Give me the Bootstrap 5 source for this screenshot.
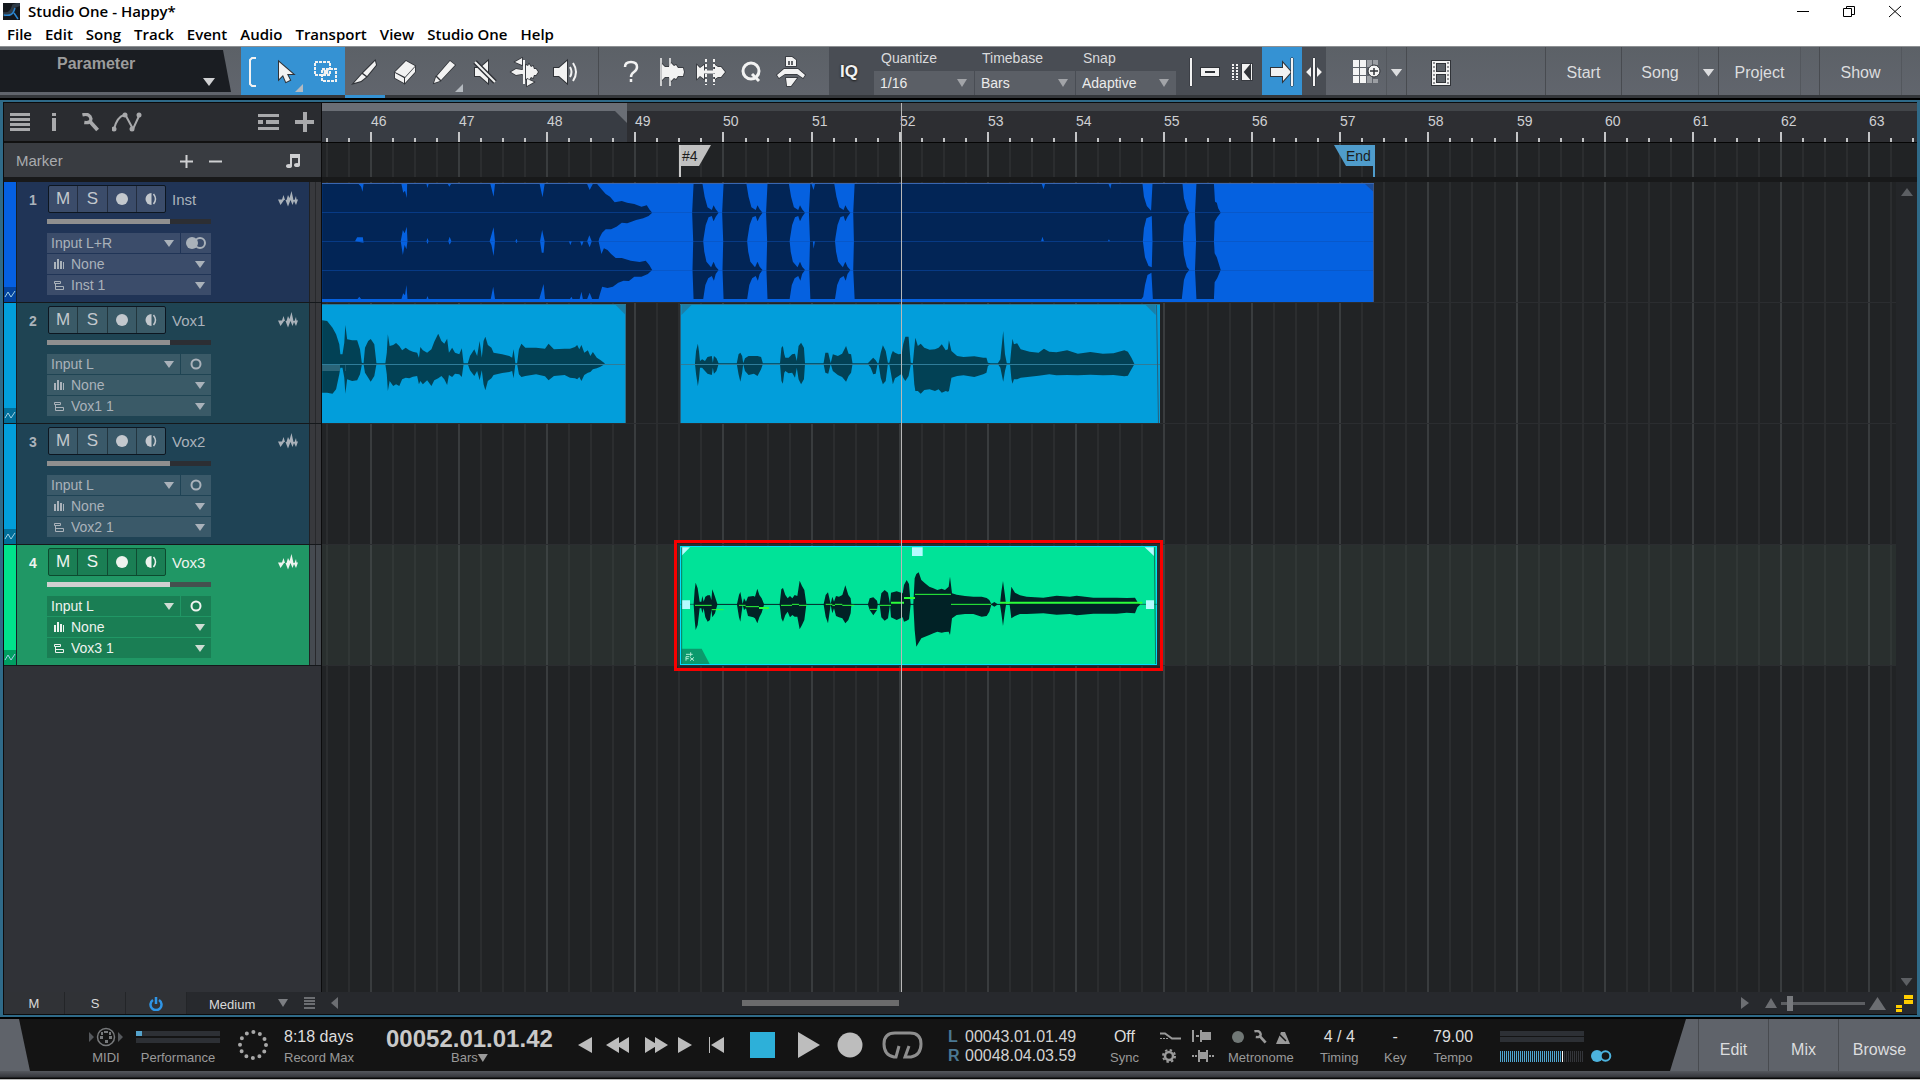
<!DOCTYPE html>
<html lang="en">
<head>
<meta charset="utf-8">
<meta name="viewport" content="width=device-width, initial-scale=1">
<title>Studio One - Happy*</title>
<link href="https://cdn.jsdelivr.net/npm/bootstrap@5.3.0/dist/css/bootstrap.min.css" rel="stylesheet">
<style>
body{font-family:"Liberation Sans",Arial,sans-serif;font-size:14px;line-height:20px;background:#000;color:#c3c5c8;min-height:100vh;overflow:hidden}
button,select{font:inherit;color:inherit;background:none;border:0;padding:0;margin:0;border-radius:0}
svg{display:block;flex:none}
a{color:inherit;text-decoration:none}
select{appearance:none;outline:0;cursor:pointer}
.app-shell{height:100vh}
/* window caption and menu */
.titlebar{height:22px;background:#fff;color:#000;padding:0 18px 0 3px;font:600 15px/20px "Open Sans","Noto Sans",sans-serif}
.win-btns{gap:32px}
.menubar{height:24px;background:#fff;color:#000;padding-left:7px;gap:13px;font:600 15px/24px "Open Sans","Noto Sans",sans-serif}
/* toolbar */
.toolbar{height:52px;background:linear-gradient(#5c6167,#61656d);border-top:1px solid #8d9093;border-bottom:3px solid #34373b;margin-bottom:2px}
.param-box{width:231px;margin:3px 10px 3px 0;background:#1a1d22;clip-path:polygon(0 0,223px 0,100% 100%,0 100%);color:#9c9c9c;font-weight:bold;font-size:16px}
.param-box span{margin:4px 0 0 57px}
.tri{width:12px;height:8px;background:currentColor;clip-path:polygon(0 0,100% 0,50% 100%);flex:none}
.tri.up{transform:rotate(180deg)}
.tri.sm{width:10px}
.tri.dim{color:#7c7e82}
.param-box .tri{position:absolute;left:203px;top:28px;color:#d0d1d3}
.tool{width:40px;padding-top:2px;display:flex;align-items:center;justify-content:center;position:relative;flex:none}
.tool.slim{width:24px}
.tool.slimmer{width:18px;padding-right:6px}
.tool.wide{width:60px;padding-left:22px}
.tool.iq{font-size:17px;font-weight:bold;color:#f2f2f2;text-shadow:0 0 2px #222,0 1px 2px #222}
.tool.sel{background:#3592d3}
.tool.armed::before{content:"";position:absolute;left:0;right:0;bottom:-3px;height:3px;background:#3592d3}
.tool.more::after{content:"";position:absolute;right:2px;bottom:3px;width:8px;height:8px;background:#b5bac0;clip-path:polygon(100% 0,100% 100%,0 100%)}
.ico *{paint-order:stroke}
.ico{fill:#f2f2f2;stroke:#303338;stroke-width:2;overflow:visible}
.ico .ln{fill:none;stroke:#f2f2f2}
.ico .bold{stroke-width:3}
.ico .holes{stroke:#303338}
.tgroup{display:flex;height:100%}
.tgroup.edge{border-left:1px solid #484b50;padding:0 18px 0 12px;margin-left:13px}
.tgroup.dark{background:#494d54}
.opts{margin:0 3px 0 5px}
.opt label{padding-left:7px;height:24px;line-height:22px;color:#d9dadc}
.opt{width:101px}
.pick{position:relative;background:#5b5f66;height:24px;margin-right:1px;color:#ececec}
.pick select{width:100%;height:24px;padding-left:6px}
.pick .tri{position:absolute;right:7px;top:8px;width:10px;color:#a2a4a8;pointer-events:none}
.page-btn{border-left:1px solid #484b50;padding-top:3px;font-size:16px;color:#dcdddf;text-align:center;height:100%}
.page-btn.thin{width:20px;border-left-color:#53575d}
.page-btn.last{width:19px}
.page-btn.w-start{width:76px}.page-btn.w-song{width:77px}.page-btn.w-page{width:82px}
/* arrange frame */
.frame{border:solid #2f6a88;border-width:2px 3px;background:#232528;flex:1 1 0;min-height:0;margin-bottom:2px}
.frame-in{border:1px solid #0b0c0d;border-right-width:0;height:100%}
.split{min-height:0}
.side{width:318px;border-right:1px solid #0b0b0c;background:#303237;flex:none}
.side-tools{height:40px;background:#2a2c30;border-bottom:2px solid #111;padding:0 7px 0 6px;color:#a8a9ab}
.gap-l{margin-left:22px}
.gap-s{margin-left:12px}
.gap-note{margin-left:64px}
.side-marker{height:34px;background:#393c41;padding:2px 20px 0 12px;font-size:15px;color:#a9abae}
.gutter{height:5px;background:#18191a}
.track{height:121px;border-bottom:1px solid #15181b;color:#aab2ba}
.strip{width:12px;flex:none}
.strip svg{margin-top:auto;width:12px;height:15px;background:rgba(0,0,0,.3)}
.t-body{width:293px;border-left:1px solid #15202a;padding:3px 11px 0 30px;position:relative}
.t-num{position:absolute;left:12px;top:8px;width:12px;font-weight:bold;font-size:14px}
.msr{width:118px;height:28px;border:1px solid #0d1620;border-radius:2px;background:rgba(255,255,255,.12);overflow:hidden;color:#c3c8cd}
.msr button{flex:1;display:flex;align-items:center;justify-content:center;font-size:17px;border-left:1px solid rgba(0,0,0,.4)}
.msr button:first-child{border-left:0}
.head-row{padding-left:1px}
.t-name{font-size:15px;margin:2px 0 0 6px}
.t-edge{width:12px;background:#38393d;border-left:1px solid #202225}
.t-edge i{display:block;width:6px;height:100%;border-right:1px solid #28292c}
.fader{appearance:none;display:block;width:164px;height:5px;margin:6px 0 9px;background:linear-gradient(90deg,#8f8f8f 75%,#2c2e33 75%)}
.fader::-webkit-slider-thumb{appearance:none;width:1px;height:5px;background:transparent}
.io{width:164px;gap:1px}
.io-line{height:20px;background:rgba(255,255,255,.12);position:relative;padding-left:7px}
.io-line svg{width:10px;margin-right:7px}
.io-line select{flex:1;height:20px;line-height:20px;min-width:0}
.io-line .tri{position:absolute;right:6px;top:7px;width:10px;height:7px;pointer-events:none}
.io-half{width:30px;margin-left:1px;background:rgba(255,255,255,.12);display:flex;align-items:center;justify-content:center}
.io-line.inp{padding-left:4px}
.track.cur{color:#eef3ef}
.track.cur .msr{background:rgba(0,0,0,.16);border-color:#0c4a2e;color:#eef3ef}
.track.cur .io-line,.track.cur .io-half{background:rgba(0,0,0,.16)}
.track.cur .tri{color:#cfdcd4}
.track.cur .t-edge{background:#454a50}
.track.cur .fader{background:linear-gradient(90deg,#d0d0d0 75%,#45504e 75%)}
/* time line */
.timeline{background:#212325;overflow:hidden}
.ruler{height:40px;background:linear-gradient(#424549 8px,#2d2e32 8px);border-bottom:1px solid #050505}
.loop-range{position:absolute;left:0;top:0;width:305px;height:39px;background:linear-gradient(#6a6e75 8px,#383c43 8px)}
.loop-range::after{content:"";position:absolute;right:0;top:8px;width:12px;height:12px;background:#6a6e75;clip-path:polygon(0 0,100% 0,100% 100%)}
.bar-no{position:absolute;top:8px;color:#cfd0d2}
.over{position:absolute;left:0;top:0}
.marker-lane{height:34px}
.flag{position:absolute;top:2px;height:32px;font-size:14px;color:#1c1c1c}
.flag span{display:block;height:21px;line-height:23px}
.flag.mk{border-left:2px solid #c8c8c8;left:357px}
.flag.mk span{background:#c0c0c0;width:30px;clip-path:polygon(0 0,100% 0,18px 100%,0 100%);padding-left:1px}
.flag.end{border-right:2px solid #4f9ccb;left:1012px}
.flag.end span{background:#4f9ccb;width:39px;clip-path:polygon(0 0,100% 0,100% 100%,12px 100%);padding-left:12px}
.vscroll{width:21px;background:#242629;color:#5c5f63;padding:6px 0}
.lane{height:121px;border-bottom:1px solid #2b2d30}
.lane.cur{background:rgba(72,92,82,.22)}
.clip{position:absolute;top:1px;height:119px;overflow:hidden}
.clip.inst{left:0;width:1052px;background:#0561e0;border-top:1px solid #3a66b0}
.clip.vox{background:#029edb;border-top:1px solid #2a7897}
.clip.v-a{left:0;width:304px}
.clip.v-b{left:358px;width:480px}
.clip.pick-on{left:358px;width:477px;background:#00e398;outline:1px solid #00e0ff;outline-offset:-1px}
.red-mark{position:absolute;left:352px;top:-5px;width:489px;height:131px;border:3px solid #f80000}
.playhead{position:absolute;left:579px;top:0;bottom:0;width:1px;background:#b8b8b8}
.arr-foot{height:22px;background:#27292d;font-size:13px;color:#dadada}
.arr-foot .sq{width:61px;height:22px;padding-top:2px;background:#303236;border-right:1px solid #232528}
.height-pick{width:69px;margin:3px 0 0 22px}
.arr-foot .rows-i{margin:0 16px}
.hthumb{position:absolute;left:404px;top:8px;width:157px;height:6px;background:#6b6b6c}
.zoomer{appearance:none;width:84px;height:15px;background:linear-gradient(transparent 6px,#5c5e62 6px 9px,transparent 9px);margin:0 4px}
.zoomer::-webkit-slider-thumb{appearance:none;width:6px;height:15px;background:#77797d}
.stairs{margin:0 4px 0 10px}
/* transport */
.transport{height:52px;background:#141414;display:grid;grid-template-columns:89px 47px 102px 46px 102px 192px 370px 162px 50px 68px 92px 64px 49px 67px 112px 1fr auto;color:#9a9a9a;font-size:13px;flex:none}
.cell{display:flex;flex-direction:column;padding-top:8px;justify-self:start;align-items:center}
.cell>*{height:20px}
.cell>span:last-child{padding-top:1px}
.cell.perf{width:84px}
.perf-load{width:6px;height:5px;background:#55a3cc}
.val{font-size:16px;color:#dedede}
.wedge{width:30px;background:#5f636a;clip-path:polygon(0 0,19px 0,100% 100%,0 100%)}
.cell .bigtime{font-size:24px;font-weight:bold;color:#c9c9c9;height:21px;line-height:24px}
.keys{display:grid;grid-template-columns:28px 39px 33px 31px 41px 48px 39px 45px 41px;align-items:center;justify-items:start;color:#bdbdbd}
.lr{display:grid;grid-template-columns:17px auto;grid-template-rows:19px 19px;align-content:start;padding-top:8px;font-size:16px;line-height:19px;color:#d2d2d2}
.lr b{color:#4a7892}
.minis{display:grid;grid-template-columns:32px 22px;grid-template-rows:20px 20px;padding-top:7px;align-items:center;justify-self:start;align-content:start}
.minis .gear{margin-left:2px}
.meters{height:23px}
.meter{height:5px;background:#2d3035;margin-bottom:2px}
.meters .meter{width:84px;margin-bottom:1px}
.lvl{width:84px;height:11px;background:repeating-linear-gradient(90deg,transparent 0 1px,#141414 1px 2px),linear-gradient(90deg,#4fa5d0 61px,#fff 61px 63px,#34363b 63px)}
.right-pages{background:#5f636a;clip-path:polygon(16px 0,100% 0,100% 100%,0 100%);padding-left:28px;font-size:16px;color:#dcdddf}
.right-pages button{width:70px;padding-top:9px;border-left:1px solid #484b50;height:52px}
.right-pages button:last-child{width:82px}
.base-strip{height:9px;background:linear-gradient(#55585e,#35373c 6px,#0a0a0a 7px,#0a0a0a 8px,#b9b9b9 8px);flex:none}
</style>
</head>
<body>
<svg width="0" height="0" class="position-absolute">
<symbol id="i-wrench" viewBox="0 0 20 20"><path d="M2 2q8-2 9 4 0 5-7 4" fill="none" stroke="currentColor" stroke-width="3.500"/><path d="M9 8l9 10" stroke="currentColor" stroke-width="4"/></symbol>
<symbol id="i-peaks" viewBox="0 0 20 16"><path d="M0 8.500h4L5.500 4 7 9h1.500L10 4l1.500 3L13.500 0 15.500 9h1L18 5l.500 3.500H20L18 14l-2-4-1.500 4-2-5L10 15.500 7.500 9 6 9l-1 1.500L2.500 14z" fill="currentColor"/></symbol>
</svg>
<div class="app-shell d-flex flex-column">
<header>
<div class="titlebar d-flex align-items-center">
<svg width="17" height="17" viewBox="0 0 17 17"><rect width="17" height="17" fill="#14181d"/><path d="M0 11c6 1 9-1 11-8l6-2" stroke="#2f3b47" stroke-width="4" fill="none"/><path d="M1 12c6 1 9 0 11-7M11 10l4 6" stroke="#2b86d0" stroke-width="1.500" fill="none"/></svg>
<span class="ms-2">Studio One - Happy*</span>
<div class="win-btns ms-auto d-flex align-items-center">
<button aria-label="Minimize"><svg width="14" height="13"><path d="M1 6.500h12" stroke="#000"/></svg></button>
<button aria-label="Restore"><svg width="14" height="13" fill="none" stroke="#000"><path d="M1.500 3.500h8v8h-8zM4.500 3V1.500h8v8H10"/></svg></button>
<button aria-label="Close"><svg width="14" height="13"><path d="M1 1l12 11M13 1L1 12" stroke="#000"/></svg></button>
</div>
</div>
<nav class="menubar d-flex">
<a href="#">File</a><a href="#">Edit</a><a href="#">Song</a><a href="#">Track</a><a href="#">Event</a><a href="#">Audio</a><a href="#">Transport</a><a href="#">View</a><a href="#">Studio One</a><a href="#">Help</a>
</nav>
</header>
<div class="toolbar d-flex flex-shrink-0">
<button class="param-box position-relative d-flex flex-shrink-0"><span>Parameter</span><i class="tri"></i></button>
<div class="tgroup">
<button class="tool slim sel" aria-label="Bracket"><svg class="ico" width="8" height="30"><path d="M7 1H3L1 3v24l2 2h4" class="ln" stroke-width="2"/></svg></button>
<button class="tool sel more" aria-label="Arrow"><svg class="ico" width="14" height="22"><path d="M1 1v17l4-4 3 7 4-2-3-6h6z"/></svg></button>
<button class="tool sel" aria-label="Range"><svg class="ico" width="22" height="22"><path class="ln" d="M1 1h15v13H1zM8 8h14v12H8z" stroke-width="2" stroke-dasharray="3 1"/><path d="M9 8l3 1 3-1-1 3 1 3-3-1-3 1 1-3z" stroke="none"/></svg></button>
<button class="tool armed" aria-label="Split"><svg class="ico" width="24" height="24"><path d="M22 1l1 4-9 11-4-3zM9 14l4 3-5 4-7 2z"/></svg></button>
<button class="tool" aria-label="Erase"><svg class="ico" width="24" height="24"><path d="M2 12L13 1l9 5-10 11zM2 13l9 5v5l-9-5zM12 18l10-11v5L12 23z" stroke-width="1.500"/></svg></button>
<button class="tool more" aria-label="Paint"><svg class="ico" width="24" height="24"><path d="M17 1l5 4L8 20l-4-4zM3 17l4 4-6 2z" stroke-width="1.500"/></svg></button>
<button class="tool" aria-label="Mute"><svg class="ico" width="24" height="24"><path d="M2 8h5l8-7v22l-8-7H2z"/><path d="M2 2l20 20" stroke-width="5"/><path class="ln" d="M2 2l20 20" stroke-width="2"/></svg></button>
<button class="tool" aria-label="Bend"><svg class="ico" width="28" height="28"><path d="M0 14l5-3 6 1 2-1v6l-2-1-6 1zM15 7l2 1 1-2 2 3 2-1 1 3h2l2 3-2 3h-2l-1 3-2-1-2 3-1-2-2 1zM11 0v7L4 4zM16 21v7l7-4z" stroke-width="1.500"/><path class="ln" d="M13 2v24" stroke-width="2"/></svg></button>
<button class="tool" aria-label="Listen"><svg class="ico" width="26" height="24"><path d="M2 8h5l8-7v22l-8-7H2z"/><path class="ln" d="M18 7q3 5 0 10M21 3q6 9 0 18" stroke-width="2"/></svg></button>
</div>
<div class="tgroup edge">
<button class="tool" aria-label="Help"><svg class="ico" width="16" height="22"><path class="ln" d="M2 6q0-5 6-5t6 5q0 3-3 5t-3 5M8 18v3" stroke-width="2.500"/></svg></button>
<button class="tool" aria-label="Strip silence"><svg class="ico" width="24" height="28"><path d="M3 6l3 3 4 0 2-4 3 3 2-1 2 3h5l1 4-1 4h-5l-2 3-2-1-3 3-2-4-4 0-3 3z" stroke-width="1.500"/><path class="ln" d="M2 0v28M11 0v28" stroke-width="1.500"/></svg></button>
<button class="tool" aria-label="Transients"><svg class="ico" width="30" height="28"><path d="M1 7l3 3 4-3v14l-4-3-3 3zM19 7l3 2h3l4 5-4 5h-3l-3 2z" stroke-width="1.500"/><path class="ln" d="M7 14h14" stroke-width="3"/><path class="ln" d="M10 1v26M18 1v26" stroke-width="2" stroke-dasharray="3 2"/></svg></button>
<button class="tool" aria-label="Quantize"><svg class="ico" width="22" height="22"><circle class="ln bold" cx="11" cy="10" r="8"/><path class="ln bold" d="M12 13l7 7"/></svg></button>
<button class="tool" aria-label="Macros"><svg class="ico" width="30" height="30"><path d="M10 0h6l4 3v6H10zM1 18l7-6h14l7 6-2 3-6-4H9l-6 4zM10 21h11l-6 8h-4z" stroke-width="1.500"/><path class="holes" d="M13 4v4M16 4v4" stroke-width="1.500"/></svg></button>
</div>
<div class="tgroup dark">
<button class="tool iq">IQ</button>
<div class="opts d-flex">
<div class="opt"><label class="d-block" for="q">Quantize</label><div class="pick"><select id="q"><option>1/16</option></select><i class="tri"></i></div></div>
<div class="opt"><label class="d-block" for="tb">Timebase</label><div class="pick"><select id="tb"><option>Bars</option></select><i class="tri"></i></div></div>
<div class="opt"><label class="d-block" for="sn">Snap</label><div class="pick"><select id="sn"><option>Adaptive</option></select><i class="tri"></i></div></div>
</div>
<button class="tool slim" aria-label="Snap off"><svg class="ico" width="6" height="30"><path d="M1 1h2v28H1z" stroke-width="1"/></svg></button>
<button class="tool slimmer" aria-label="Snap event"><svg class="ico" width="20" height="8"><path d="M1 0h18v8H1z"/><path class="holes" d="M5 4h10" stroke-width="2"/></svg></button>
<button class="tool" aria-label="Snap grid"><svg class="ico" width="24" height="18"><path class="ln" d="M3 1v16M7 1v16" stroke-width="2" stroke-dasharray="2 1"/><path d="M12 1h10v16H12z" stroke-width="1.500"/><path d="M20 3v12l-5-6z" fill="#303338"/></svg></button>
<button class="tool sel" aria-label="Autoscroll"><svg class="ico" width="24" height="30"><path d="M1 11h12V6l8 9-8 9v-5H1z"/><path d="M21 1h2v28h-2z" stroke-width="1"/></svg></button>
<button class="tool slim" aria-label="Cursor follow"><svg class="ico" width="16" height="30"><path d="M7 1h2v28H7zM5 10v10l-5-5zM11 10v10l5-5z" stroke-width="1"/></svg></button>
</div>
<button class="tool wide" aria-label="Grid"><svg width="28" height="24" fill="#f4f4f4"><path d="M0 0h6v7H0zM7 0h6v7H7zM0 8h6v7H0zM7 8h6v7H7zM0 16h6v7H0zM7 16h6v7H7z"/><path d="M14 0h5v7h-5zM20 0h5v5h-5zM14 16h5v7h-5zM20 19h5v4h-5z" fill="#9b9ea3"/><circle cx="21" cy="11" r="6" stroke="#303338"/><path d="M21 8v7M17 11h8" stroke="#303338" stroke-width="1.500"/></svg></button>
<button class="page-btn thin" aria-label="Grid menu"><i class="tri d-block m-auto"></i></button>
<button class="page-btn flex-grow-1 ps-4" aria-label="Video"><svg class="ico" width="20" height="26"><path d="M1 1h18v24H1z"/><path d="M6 4h8v7H6zM6 15h8v7H6z" fill="#5c6167"/><path class="ln holes" d="M3 2v22M17 2v22" stroke-width="1" stroke-dasharray="2 2"/></svg></button>
<button class="page-btn w-start">Start</button><button class="page-btn w-song">Song</button><button class="page-btn thin" aria-label="Song menu"><i class="tri d-block m-auto"></i></button><button class="page-btn w-page">Project</button><i class="page-btn thin last"></i><button class="page-btn w-page">Show</button><i class="page-btn thin last"></i>
</div>

<main class="frame"><div class="frame-in d-flex flex-column">
<div class="split d-flex flex-grow-1">
<aside class="side d-flex flex-column">
<div class="side-tools d-flex align-items-center">
<svg width="20" height="18" fill="currentColor"><path d="M0 0h20v3H0zM0 5h20v3H0zM0 10h20v3H0zM0 15h20v3H0z"/></svg>
<svg class="gap-l" width="6" height="18" fill="currentColor"><path d="M0 0h4v3H0zM0 5h4v13H0z"/></svg>
<svg class="gap-l" width="20" height="19"><use href="#i-wrench"/></svg>
<svg class="gap-s" width="30" height="20" fill="none" stroke="currentColor" stroke-width="2"><path d="M2 17Q5 5 12 3M14 4l7 13 6-13"/><g fill="currentColor" stroke="none"><circle cx="2" cy="17" r="2.500"/><circle cx="13" cy="3" r="2.500"/><circle cx="20" cy="17" r="2.500"/><circle cx="27" cy="3" r="2.500"/></g></svg>
<svg class="ms-auto" width="21" height="16" fill="currentColor"><path d="M0 0h21v3H0zM0 6h5v4H0zM8 6h13v4H8zM0 13h21v3H0z"/></svg>
<svg class="ms-3" width="19" height="20" fill="currentColor"><path d="M8 0h4v8h7v4h-7v8H8v-8H0V8h8z"/></svg>
</div>
<div class="side-marker d-flex align-items-center"><span>Marker</span>
<button class="ms-auto" aria-label="Add marker"><svg width="13" height="13"><path d="M6.500 0v13M0 6.500h13" stroke="#cfd0d2" stroke-width="2"/></svg></button>
<button class="ms-3" aria-label="Remove marker"><svg width="13" height="13"><path d="M0 6.500h13" stroke="#cfd0d2" stroke-width="2"/></svg></button>
<svg class="gap-note" width="15" height="14" fill="#cfd0d2"><path d="M4 0h10v11h-2V4H6v8H4z"/><ellipse cx="3" cy="12" rx="3" ry="2"/><ellipse cx="11" cy="11" rx="3" ry="2"/></svg></div>
<div class="gutter"></div>
<div id="tracks"></div>
</aside>
<section class="timeline position-relative flex-grow-1 d-flex flex-column">
<svg class="over w-100 h-100" id="grid"></svg>
<div class="ruler position-relative" id="ruler"><div class="loop-range"></div><svg class="over w-100 h-100" id="ticks"></svg></div>
<div class="marker-lane position-relative"><div class="flag mk"><span>#4</span></div><div class="flag end"><span>End</span></div></div>
<div class="gutter position-relative"></div>
<div class="d-flex flex-grow-1 position-relative">
<div class="flex-grow-1">
<div class="lane position-relative"><div class="clip inst"><svg class="over" width="1052" height="119" id="w1"></svg></div></div>
<div class="lane position-relative"><div class="clip vox v-a"><svg class="over" width="304" height="119" id="w2"></svg></div><div class="clip vox v-b"><svg class="over" width="480" height="119" id="w3"></svg></div></div>
<div class="lane position-relative"></div>
<div class="lane cur position-relative"><div class="clip pick-on"><svg class="over" width="477" height="119" id="w4"></svg></div><div class="red-mark"></div></div>
</div>
<div class="vscroll d-flex flex-column align-items-center justify-content-between"><i class="tri up"></i><i class="tri"></i></div>
</div>
<div class="playhead"></div>
</section>
</div>
<footer class="arr-foot d-flex align-items-center">
<button class="sq">M</button><button class="sq">S</button><button class="sq" aria-label="Power"><svg class="m-auto" width="14" height="14" fill="none" stroke="#2f95e6" stroke-width="2.500"><path d="M4 3a5.500 5.500 0 1 0 6 0M7 0v7"/></svg></button>
<select class="height-pick" aria-label="Track height"><option>Medium</option></select><i class="tri sm dim"></i>
<svg class="rows-i" width="11" height="12" fill="#6c6e72"><path d="M0 0h11v2H0zM0 3h11v2H0zM0 6h11v2H0zM0 10h11v2H0z"/></svg>
<svg width="7" height="12" fill="#6c6e72"><path d="M7 0v12L0 6z"/></svg>
<div class="flex-grow-1 position-relative align-self-stretch"><div class="hthumb"></div></div>
<svg width="8" height="12" fill="#6c6e72" class="me-3"><path d="M0 0v12l8-6z"/></svg>
<svg width="12" height="10" fill="#6c6e72"><path d="M0 10h12L6 0z"/></svg>
<input type="range" class="zoomer" aria-label="Zoom" value="8">
<svg width="17" height="13" fill="#6c6e72"><path d="M0 13h17L8.500 0z"/></svg>
<svg class="stairs" width="17" height="18" fill="#ffcd00"><path d="M8 1h9v4H8zM8 6h9v4H8zM0 11h6v3H0zM0 15h6v3H0z"/></svg>
</footer>
</div></main>

<section class="transport">
<div class="wedge"></div>
<div class="cell"><svg width="34" height="20" fill="#55585c"><path d="M0 5l5 5-5 5zM29 5l5 5-5 5z"/><circle cx="17" cy="10" r="8.500" fill="none" stroke="#77797b" stroke-width="1.500"/><g fill="#77797b"><path d="M15 4h4v2h-4zM11 9h3v3h-3zM20 9h3v3h-3zM12 5h2v3h-2zM20 5h2v3h-2zM16 13h3v3h-3z"/></g></svg><span>MIDI</span></div>
<div class="cell perf"><div class="w-100 pt-1"><div class="meter"><div class="perf-load"></div></div><div class="meter"></div></div><span>Performance</span></div>
<div class="d-flex align-items-center"><svg width="30" height="30"><circle cx="15" cy="15" r="13" fill="none" stroke="#a8a8a8" stroke-width="4" stroke-linecap="round" stroke-dasharray="0 6.807"/></svg></div>
<div class="cell align-items-start"><span class="val">8:18 days</span><span>Record Max</span></div>
<div class="cell"><span class="bigtime">00052.01.01.42</span><button class="d-flex align-items-center">Bars<i class="tri sm"></i></button></div>
<div class="keys">
<button aria-label="Previous"><svg width="14" height="16" fill="currentColor"><path d="M14 0v16L0 8z"/></svg></button>
<button aria-label="Rewind"><svg width="23" height="16" fill="currentColor"><path d="M13 0v16L0 8zM23 0v16L10 8z"/></svg></button>
<button aria-label="Forward"><svg width="23" height="16" fill="currentColor"><path d="M0 0v16l13-8zM10 0v16l13-8z"/></svg></button>
<button aria-label="Next"><svg width="14" height="16" fill="currentColor"><path d="M0 0v16l14-8z"/></svg></button>
<button aria-label="Return to zero"><svg width="15" height="16" fill="currentColor"><path d="M0 0h1v16H0zM15 0v16L2 8z"/></svg></button>
<button aria-label="Stop"><svg width="25" height="26"><rect width="25" height="26" fill="#2db0d9"/></svg></button>
<button aria-label="Play"><svg width="22" height="26" fill="currentColor"><path d="M0 0v26l22-13z"/></svg></button>
<button aria-label="Record"><svg width="26" height="26" fill="currentColor"><circle cx="13" cy="13" r="12.500"/></svg></button>
<button aria-label="Loop"><svg width="41" height="28" fill="none" stroke="#8e8e8e" stroke-width="3"><path d="M17 15l-3 11h-2Q2 24 2 13 2 2 13 2h15q11 0 11 11 0 11-10 13h-6l4-11"/></svg></button>
</div>
<div class="lr"><b>L</b><span>00043.01.01.49</span><b>R</b><span>00048.04.03.59</span></div>
<div class="cell"><span class="val">Off</span><span>Sync</span></div>
<div class="minis">
<svg width="21" height="8" fill="none" stroke="#9a9a9a"><path d="M0 1.500h5l7 5h9" stroke-width="2"/><path d="M0 6.500h8" stroke-dasharray="2 1"/></svg>
<svg width="19" height="12" fill="#9a9a9a"><path d="M0 0h2v12H0zM4 5h3v2H4zM8 0h2v2h9v8h-9v2H8z"/></svg>
<svg class="gear" width="14" height="14" viewBox="0 0 14 14"><circle cx="7" cy="7" r="4" fill="none" stroke="#9a9a9a" stroke-width="2.500"/><circle cx="7" cy="7" r="6" fill="none" stroke="#9a9a9a" stroke-width="2" stroke-dasharray="2.400 2.310"/></svg>
<svg width="22" height="12" fill="#9a9a9a"><path d="M0 5h2v2H0zM3 5h2v2H3zM6 0h2v2h6V0h2v12h-2v-3H8v3H6zM17 5h2v2h-2zM20 5h2v2h-2z"/></svg>
</div>
<div class="cell"><div class="w-100 d-flex align-items-center justify-content-between px-1"><svg width="12" height="12"><circle cx="6" cy="6" r="6" fill="#717876"/></svg><svg width="14" height="14"><use href="#i-wrench"/></svg><svg width="14" height="13"><path d="M0 13L5 1h4l5 12z" fill="#9a9a9a"/><path d="M1 1l9 9" stroke="#141414" stroke-width="1.500"/></svg></div><span>Metronome</span></div>
<div class="cell"><span class="val">4 / 4</span><span>Timing</span></div>
<div class="cell"><span class="val">-</span><span>Key</span></div>
<div class="cell"><span class="val">79.00</span><span>Tempo</span></div>
<div class="d-flex flex-column pt-2"><div class="meters pt-1"><div class="meter"></div><div class="meter"></div></div><div class="d-flex align-items-center"><div class="lvl"></div><svg class="ms-2" width="21" height="12"><circle cx="6" cy="6" r="6" fill="#4cb2dd"/><circle cx="14.500" cy="6" r="4.800" fill="#141414" stroke="#4cb2dd" stroke-width="2"/></svg></div></div>
<div></div>
<div class="right-pages d-flex"><button>Edit</button><button>Mix</button><button>Browse</button></div>
</section>
<div class="base-strip"></div>
</div>
<script>
/* track list */
const tracks=[
 {n:1,name:'Inst',input:'Input L+R',out:'Inst 1',strip:'#0560e2',bg:'#203456',stereo:true},
 {n:2,name:'Vox1',input:'Input L',out:'Vox1 1',strip:'#029edb',bg:'#1f4453'},
 {n:3,name:'Vox2',input:'Input L',out:'Vox2 1',strip:'#029edb',bg:'#1f4355'},
 {n:4,name:'Vox3',input:'Input L',out:'Vox3 1',strip:'#00e38b',bg:'#209765',cur:true}];
document.getElementById('tracks').innerHTML=tracks.map(t=>`
<div class="track d-flex ${t.cur?'cur':''}">
 <div class="strip d-flex" style="background:${t.strip}"><svg viewBox="0 0 12 15"><path d="M1 10l3-5 3 5 4-6" fill="none" stroke="#9fd0e6"/></svg></div>
 <div class="t-body" style="background:${t.bg}">
  <span class="t-num">${t.n}</span>
  <div class="head-row d-flex align-items-center">
   <div class="msr d-flex"><button>M</button><button>S</button><button aria-label="Record ${t.name}"><svg width="12" height="12" fill="currentColor"><circle cx="6" cy="6" r="6"/></svg></button><button aria-label="Monitor ${t.name}"><svg width="12" height="12"><path d="M6.500 0v12A6 6 0 0 1 6.500 0z" fill="currentColor"/><path d="M8.500 1q4 5 0 10" fill="none" stroke="currentColor" stroke-width="1.500"/></svg></button></div>
   <span class="t-name">${t.name}</span>
   <svg class="ms-auto" width="20" height="16"><use href="#i-peaks"/></svg>
  </div>
  <input class="fader" type="range" value="75" aria-label="Volume ${t.name}">
  <div class="io d-flex flex-column">
   <div class="d-flex"><div class="io-line inp d-flex flex-grow-1"><select aria-label="Input ${t.name}"><option>${t.input}</option></select><i class="tri"></i></div>
   <div class="io-half">${t.stereo?'<svg width="20" height="12"><circle cx="6" cy="6" r="6" fill="currentColor"/><circle cx="14" cy="6" r="5" fill="none" stroke="currentColor" stroke-width="2"/></svg>':'<svg width="12" height="12"><circle cx="6" cy="6" r="4.500" fill="none" stroke="currentColor" stroke-width="2"/></svg>'}</div></div>
   <div class="io-line d-flex align-items-center"><svg height="10" fill="currentColor"><path d="M0 3h2v7H0zM3 0h2v10H3zM6 2h2v8H6zM9 3h1v7H9z"/></svg><select aria-label="Instrument ${t.name}"><option>None</option></select><i class="tri"></i></div>
   <div class="io-line d-flex align-items-center"><svg height="10" fill="none" stroke="currentColor"><path d="M.5 1.500h6v2h-6zM1.500 4v4M1.500 6.500h8v3h-8z"/></svg><select aria-label="Output ${t.name}"><option>${t.out}</option></select><i class="tri"></i></div>
  </div>
 </div>
 <div class="t-edge flex-grow-1"><i></i></div>
</div>`).join('');

/* ruler: bar 46 sits 48 px from the left, 17 bars span 1498 px */
const barX=b=>Math.round(48+(b-46)*1498/17);
let ticks='',grid='',nums='';
for(let q=181;q<=256;q++){const b=q/4,x=barX(b),major=q%4===0;
 ticks+=`<rect x="${x}" y="${major?29:35}" width="2" height="${major?11:5}" fill="#c4c5c7"/>`;
 if(x<1574)grid+=`<rect x="${x}" y="40" width="2" height="860" fill="${major?'#393c3e':'#2b2d2f'}"/>`;
 if(major&&b>45&&b<64)nums+=`<span class="bar-no" style="left:${x+1}px">${b}</span>`;}
document.getElementById('ticks').innerHTML=ticks;
document.getElementById('grid').innerHTML=grid;
document.getElementById('ruler').insertAdjacentHTML('beforeend',nums);

/* envelope: "x,top,bottom" samples */
const env=(s,c,dx=0)=>{const p=s.trim().split(/\s+/).map(v=>v.split(',').map(Number)).map(([x,u,d])=>[x+dx,u,d??c+1]);
 return 'M'+p.map(a=>a[0]+' '+a[1]).join('L')+'L'+p.reverse().map(a=>a[0]+' '+a[2]).join('L')+'z';};
const poly=s=>'M'+s.trim().replace(/ /g,'L').replace(/,/g,' ')+'z';
const scale='scale(.357143 .333333)';

/* stereo backing track */
const block=(l,r)=>{const o=[[0,42],[6,80],[14,112],[26,120],[31,106],[37,118],[45,128],[37,140],[31,154],[26,138],[17,142],[9,165],[3,205],[2,214],[5,245],[11,275],[24,292],[31,275],[37,290],[45,300],[37,312],[32,332],[26,318],[16,325],[8,345],[2,387]];
 return 'M'+l+' 42L'+o.map(a=>(r+a[0])+' '+a[1]).join('L')+`L${l} 387L${l-3} 300L${l-1} 214L${l-4} 128z`;};
const dark=[poly('6,42 776,42 790,60 800,72 812,80 825,97 845,93 860,98 880,102 900,110 915,106 922,118 930,128 920,138 905,145 885,150 870,156 860,160 845,158 830,170 815,178 800,178 790,188 782,205 780,214 783,228 788,252 795,235 805,240 815,252 828,264 845,264 870,272 895,276 912,272 922,285 930,300 918,312 900,320 880,320 865,333 850,332 835,338 820,350 805,354 790,350 783,375 780,387 6,387'),
 block(1046,1071),block(1130,1194),block(1253,1313),block(1373,1440)].join('');
const cuts=['108,42 122,42 119,65 115,50','228,42 244,42 243,84 238,62 233,68','298,42 304,42 301,54','358,42 367,42 362,50','477,42 490,42 486,80','615,42 629,42 623,82','748,42 764,42 755,60','98,214 104,202 120,202 122,218','226,214 232,180 237,190 243,170 245,214 242,238 237,225 232,255','298,214 301,204 304,214 301,222','359,214 363,200 368,214 363,224','475,214 486,172 490,214 486,258 480,225','547,214 550,206 553,214 550,220','616,214 622,180 629,214 626,248 621,248','697,214 705,214 701,226','728,214 738,214 733,228','748,214 754,196 761,214 755,232','105,387 110,380 115,387','228,387 233,370 238,376 242,345 245,387','298,387 301,378 304,387','478,387 485,350 490,387','614,387 626,342 630,387','700,387 704,380 707,387','727,387 732,365 736,387','748,387 755,368 762,387','1376,42 1386,42 1382,60','1380,214 1386,214 1382,236'].map(poly).join('');
const dark2=['-15,42 791,42 795,80 803,108 815,122 819,42 903,42 907,85 915,115 922,128 915,140 907,165 904,214 907,255 915,290 922,300 913,312 907,330 901,387 820,387 816,308 805,315 798,345 793,380 788,387 -15,387 -19,300 -17,214 -19,128','942,42 991,42 994,95 999,98 1003,115 1010,128 1000,142 993,155 991,214 993,250 999,262 1010,300 1000,325 993,337 991,387 942,387 938,300 941,214 938,128'].map(poly).join('');
const cuts2=['792,214 795,175 802,145 817,138 819,214 817,292 808,288 798,262','509,42 518,42 514,58','696,42 704,42 701,56','507,214 511,200 515,214','694,214 697,208 700,214'].map(poly).join('');
document.getElementById('w1').innerHTML=`<g transform="translate(-2 -14) ${scale}"><path d="${dark}" fill="#022556"/><path d="${cuts}" fill="#0561e0"/></g><g transform="translate(538 -14) ${scale}"><path d="${dark2}" fill="#022556"/><path d="${cuts2}" fill="#0561e0"/><path d="M1412 40h26v26z" fill="#1c4d9a"/></g><path d="M0 28.500h1052M0 57.500h1052M0 86.500h1052" stroke="#0c4fb4" stroke-opacity=".5"/><path d="M1051.500 0v119" stroke="#3b5586"/>`;

/* vocals */
const v1='6,448,665 20,450,665 35,470,668 45,490,655 54,520,610 57,550,590 63,550,590 68,515,620 71,462,668 76,505,625 90,508,630 104,508,628 112,535,610 117,575,582 122,577,580 126,530,605 135,510,620 142,504,632 152,520,615 158,577,580 183,577,580 187,545,610 190,490,660 195,525,630 205,522,645 213,516,640 222,525,645 230,538,625 240,530,620 250,538,622 260,542,617 272,545,615 277,560,640 281,528,630 288,538,640 300,545,628 312,535,645 320,512,628 331,488,622 340,510,615 348,518,625 356,503,642 361,545,612 370,530,618 378,545,608 390,550,610 397,532,618 402,577,580 414,577,580 420,555,598 432,535,615 440,555,600 447,510,628 453,560,598 458,510,640 463,497,658 470,522,630 480,530,622 486,545,612 510,550,606 530,555,603 538,560,600 542,535,622 547,577,580 552,577,580 557,535,610 564,518,618 575,530,615 605,530,610 630,533,616 640,518,628 655,535,615 685,533,612 700,533,620 714,528,622 720,522,625 726,535,618 732,522,630 740,545,612 750,538,605 757,555,603 764,543,595 775,560,592 785,567,587 797,577,580';
document.getElementById('w2').innerHTML=`<g transform="translate(-2 -134) ${scale}"><path d="${env(v1,578)}" fill="#024155"/><path d="M6 582h50v18H6zM70 582h2v18h-2z" fill="#2a6478"/><path d="M828 402h28v30z" fill="#1a7fa8"/></g><path d="M0 59.500h304" stroke="#2f7c99"/><path d="M303.500 0v119" stroke="#2a6f8c"/>`;
const v2a='1050,577 1053,540,610 1058,518,645 1061,540,625 1064,570,590 1070,565,590 1078,570,600 1085,558,608 1097,555,612 1100,575,590 1103,555,608 1110,562,600 1116,577 1167,577 1172,550,610 1177,545,632 1182,555,605 1185,577 1190,562,600 1200,555,612 1215,555,608 1225,555,615 1235,558,595 1240,577 1288,577 1292,530,630 1296,525,638 1300,550,605 1303,560,600 1312,560,607 1322,550,605 1330,548,620 1335,570,590 1340,525,625 1347,515,640 1355,530,625 1358,577 1410,577 1415,545,605 1423,545,608 1430,577 1436,550,600 1450,555,612 1462,548,618 1473,525,632 1480,548,615 1487,550,605 1491,577 1534,577';
const v2b='22,577 30,568,590 37,560,610 44,568,608 49,577 52,577 58,545,620 64,523,640 72,540,630 78,575 82,575 88,550,615 92,540,640 98,545,622 108,550,615 117,548,608 121,520,620 127,497,630 136,497,615 142,575,582 148,577 152,530,640 155,500,660 162,525,660 170,518,668 180,530,657 195,536,655 210,535,660 220,530,655 229,520,665 240,538,660 246,535,662 249,508,660 256,540,620 272,555,615 290,558,613 320,556,618 345,560,610 354,560,605 358,575,585 366,577 386,577 393,565,590 401,480,632 406,550,600 411,577 420,577 424,530,625 427,503,638 431,520,625 440,517,625 450,535,620 475,542,617 500,545,614 515,533,612 530,542,610 550,544,613 580,538,612 610,548,613 645,543,611 680,548,613 710,547,612 740,538,616 750,542,614 760,560,595 768,578,580';
document.getElementById('w3').innerHTML=`<g transform="translate(-360 -134) ${scale}"><path d="${env(v2a,578)}${env(v2b,578,1512)}" fill="#024155"/><path d="M1012 402h28l-28 30z" fill="#1a7fa8"/><path d="M2312 402h28v30z" fill="#1a7fa8"/></g><path d="M0 59.500h480" stroke="#2f7c99"/><path d="M.5 0v119M476.500 0l2 119" stroke="#2a5f7a"/>`;
const v3='101,222 104,180,270 107,158,300 113,175,285 119,215,235 124,215,235 127,198,250 131,215,235 136,200,262 143,196,275 150,196,270 154,210,240 157,178,262 165,200,250 172,222 231,222 237,195,262 241,186,275 248,222 252,205,240 258,215,235 264,200,258 280,198,262 285,200,265 292,176,280 298,195,262 305,205,248 312,222 359,222 364,178,265 369,174,275 376,195,255 383,205,245 390,198,262 397,205,255 404,195,260 412,198,260 419,152,298 426,168,285 433,180,270 439,222 491,222 497,195,260 504,187,280 512,222 517,200,250 522,215,235 528,198,258 537,200,262 547,195,265 556,166,280 565,195,270 572,205,250 574,222 624,222 629,205,240 640,202,256 651,212,240 653,222 659,222 664,190,262 674,180,272 684,188,265 690,222 693,188,262 710,184,270 728,190,262 732,165,275 740,150,272 747,162,268 752,222 760,222 764,145,300 769,132,350 776,127,338 784,150,325 795,160,320 808,170,315 820,175,310 832,180,305 845,176,308 855,180,306 866,170,305 870,140,315 876,190,265 890,194,255 915,198,252 940,200,252 965,200,260 980,204,258 988,210,245 994,222 1003,216,230 1012,222 1020,222 1024,185,250 1029,153,288 1034,190,250 1038,222 1049,222 1054,170,265 1065,188,258 1080,196,252 1100,200,252 1150,203,250 1190,197,254 1230,200,252 1250,197,256 1300,203,251 1370,203,251 1400,204,248 1425,203,250 1432,215,232 1440,222';
document.getElementById('w4').innerHTML=`<g transform="translate(-20 -16) scale(.333333)"><path d="M62 223H1490" stroke="#0a6e58" stroke-width="3"/><path d="${env(v3,223)}" fill="#012226"/><g fill="none" stroke="#2bff3a" stroke-width="3"><path d="M105 226h50M155 239h36M237 226h20M257 230h40M363 226h33M396 223h21M417 226h24M497 223h20M517 226h8M525 223h22M547 226h36M629 238h22M659 226h34M765 193h108M873 223h120"/><path d="M297 234h30M693 218h39M732 204h33M1020 218h427" stroke-width="6"/></g><g fill="#b4fbff"><path d="M756 52h32v26h-32zM66 211h24v26H66zM1458 211h24v26h-24zM64 52h26L64 78zM1482 52h-28l28 26z"/></g><path d="M63 356h62l24 46H63z" fill="#0b9a6c"/><path d="M78 373h20M92 367v12M78 392V380h10M78 386h8M90 382l12 10M102 382L90 392" stroke="#b0ecd4" stroke-width="3" fill="none"/><path d="M65 52v350M1483 52l4 350" stroke="#0a7a68" stroke-width="3"/></g>`;
</script>
<script src="https://cdn.jsdelivr.net/npm/bootstrap@5.3.0/dist/js/bootstrap.bundle.min.js"></script>
</body>
</html>
